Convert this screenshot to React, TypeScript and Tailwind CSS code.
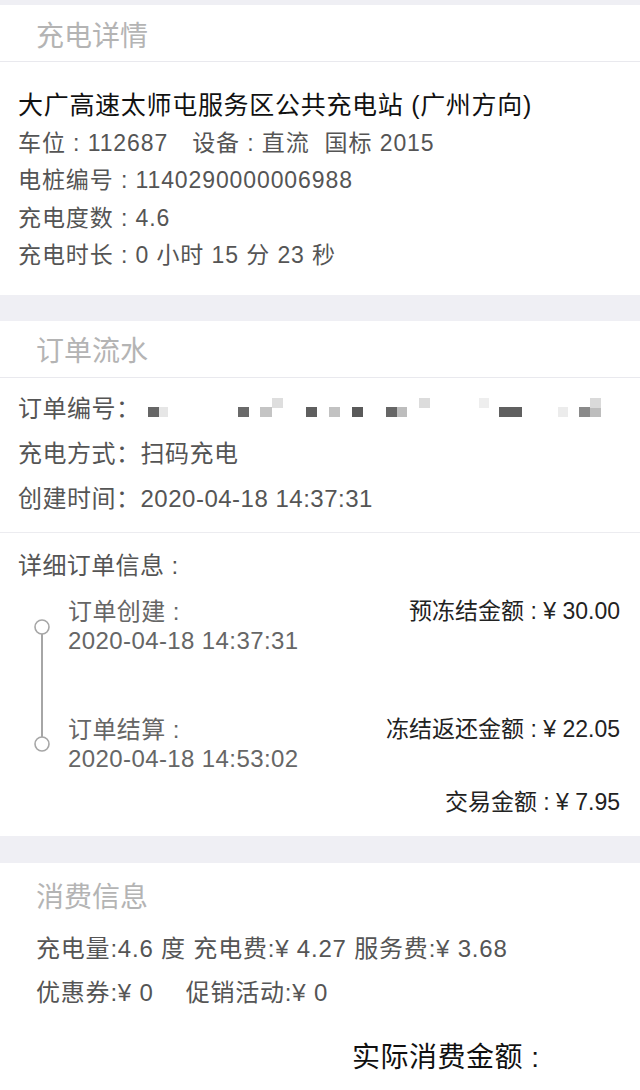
import type { ReactNode } from 'react';

const font = { fontFamily: '"Liberation Sans", "Noto Sans CJK SC", sans-serif' };

function SectionHeader({ title, border = true }: { title: string; border?: boolean }) {
  return (
    <div
      className={`h-[57px] flex items-center pt-[7px] pl-[36px] text-[28px] text-[#b4b4b4] bg-white ${
        border ? 'border-b border-[#e9e9ee]' : ''
      }`}
    >
      {title}
    </div>
  );
}

function Gap({ h }: { h: string }) {
  return <div className={`${h} bg-[#efeff4]`} />;
}

// 打码的订单号
function Mosaic() {
  const blocks = [
    [7, 12, 11, '#666'], [18, 12, 9, '#e6e6e6'],
    [97, 12, 11, '#6a6a6a'], [119, 12, 12, '#c4c4c4'], [131, 3, 11, '#dedede'],
    [165, 12, 11, '#5f5f5f'], [188, 12, 11, '#c2c2c2'], [211, 12, 11, '#5a5a5a'],
    [245, 12, 11, '#666'], [256, 12, 10, '#bdbdbd'], [278, 3, 11, '#dcdcdc'],
    [338, 3, 10, '#eeeeee'], [358, 12, 23, '#606060'],
    [417, 12, 10, '#ececec'], [438, 12, 11, '#8a8a8a'], [449, 12, 11, '#bdbdbd'], [449, 3, 11, '#dadada'],
  ] as const;
  return (
    <svg width="470" height="26" viewBox="0 0 470 26">
      {blocks.map(([x, y, w, c], i) => (
        <rect key={i} x={x} y={y} width={w} height={10} fill={c} />
      ))}
    </svg>
  );
}

function Row({ children }: { children: ReactNode }) {
  return <div className="leading-[37.5px] whitespace-nowrap">{children}</div>;
}

export default function App() {
  return (
    <div className="w-[640px] h-[1090px] bg-white overflow-hidden" style={font}>
      <Gap h="h-[5px]" />

      {/* 充电详情 */}
      <SectionHeader title="充电详情" />
      <div className="px-[18px] pt-[25px] pb-[20px] text-[23px] tracking-[0.9px] text-[#555]">
        <div className="leading-[37.5px] text-[25px] tracking-[0.7px] text-[#111]">
          大广高速太师屯服务区公共充电站 (广州方向)
        </div>
        <Row>
          车位 : 112687<span className="ml-[24px]">设备 : 直流</span>
          <span className="ml-[15px]">国标 2015</span>
        </Row>
        <Row>电桩编号 : 1140290000006988</Row>
        <Row>充电度数 : 4.6</Row>
        <Row>充电时长 : 0 小时 15 分 23 秒</Row>
      </div>

      <Gap h="h-[26px]" />

      {/* 订单流水 */}
      <SectionHeader title="订单流水" />
      <div className="px-[18px] pt-[8px] pb-[11px] text-[24px] tracking-[0.5px] text-[#555] border-b border-[#ececf0]">
        <div className="flex items-center leading-[45px]">
          <span>订单编号：</span>
          <Mosaic />
        </div>
        <div className="leading-[45px]">充电方式：扫码充电</div>
        <div className="leading-[45px]">创建时间：2020-04-18 14:37:31</div>
      </div>

      {/* 详细订单信息 */}
      <div className="px-[18px] pr-[20px] pt-[18px] pb-[19px] text-[24px] tracking-[0.4px]">
        <div className="leading-[30px] text-[#555]">详细订单信息 :</div>
        <div className="flex mt-[16px]">
          <svg width="50" height="176" viewBox="0 0 50 176" className="shrink-0">
            <line x1="24" y1="36" x2="24" y2="141" stroke="#a6a6a6" strokeWidth="2" />
            <circle cx="24" cy="30" r="7" fill="white" stroke="#a6a6a6" strokeWidth="1.6" />
            <circle cx="24" cy="147" r="7" fill="white" stroke="#a6a6a6" strokeWidth="1.6" />
          </svg>
          <div className="flex-1 flex flex-col gap-[60px]">
            <div className="flex justify-between leading-[29px]">
              <div className="text-[#666]">
                <div>订单创建 :</div>
                <div>2020-04-18 14:37:31</div>
              </div>
              <div className="text-[23px] tracking-normal text-[#222]">预冻结金额 : ¥ 30.00</div>
            </div>
            <div className="flex justify-between leading-[29px]">
              <div className="text-[#666]">
                <div>订单结算 :</div>
                <div>2020-04-18 14:53:02</div>
              </div>
              <div className="text-[23px] tracking-normal text-[#222]">冻结返还金额 : ¥ 22.05</div>
            </div>
          </div>
        </div>
        <div className="mt-[15px] leading-[29px] text-right text-[23px] tracking-normal text-[#222]">
          交易金额 : ¥ 7.95
        </div>
      </div>

      <Gap h="h-[27px]" />

      {/* 消费信息 */}
      <div className="px-[36px] pt-[20px]">
        <div className="leading-[30px] text-[28px] text-[#b4b4b4]">消费信息</div>
        <div className="mt-[14px] text-[24px] tracking-[0.8px] text-[#555]">
          <div className="leading-[44px]">充电量:4.6 度 充电费:¥ 4.27 服务费:¥ 3.68</div>
          <div className="leading-[44px]">
            优惠券:¥ 0<span className="ml-[32px]">促销活动:¥ 0</span>
          </div>
        </div>
        <div className="mt-[26px] pl-[316px] leading-[34px] text-[28px] tracking-[0.5px] text-[#111]">
          实际消费金额 :
        </div>
      </div>
    </div>
  );
}
